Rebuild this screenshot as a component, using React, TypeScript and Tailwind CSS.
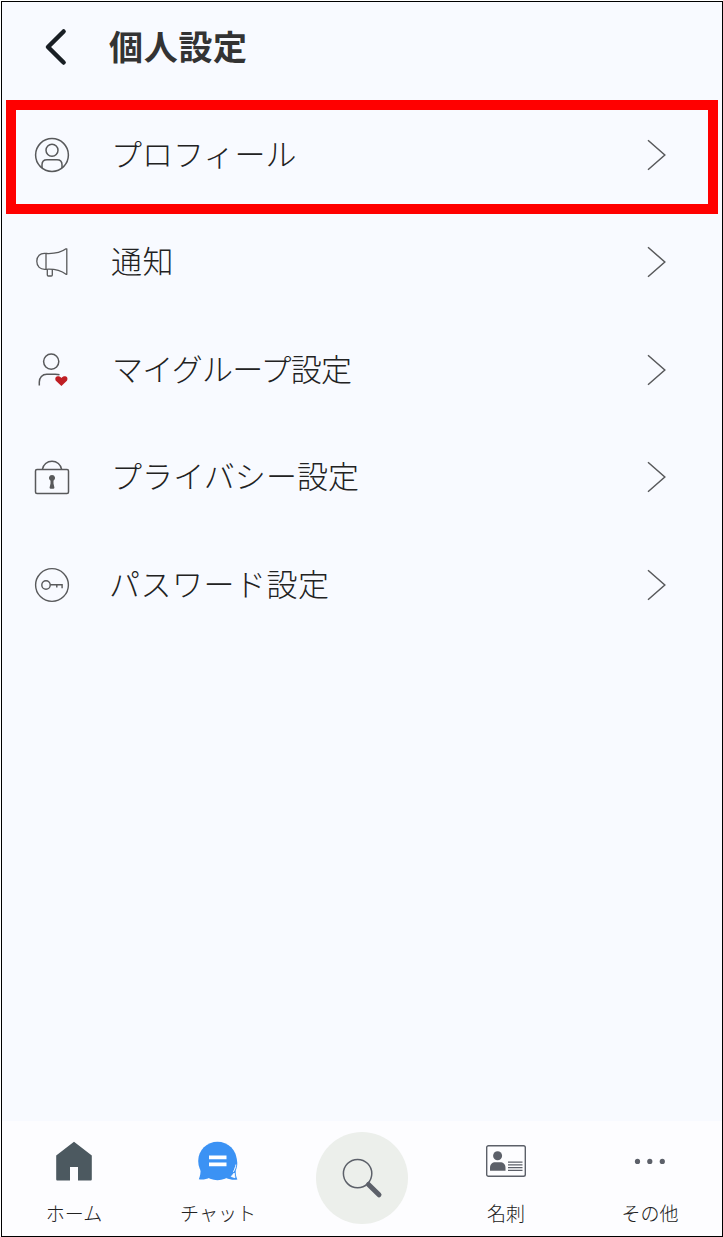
import type { ReactNode } from "react";

const stroke = "#58595b";

function ProfileIcon() {
  return (
    <svg width="36" height="36" viewBox="0 0 36 36" fill="none" stroke={stroke} strokeWidth="1.5">
      <circle cx="18" cy="18" r="16.4" />
      <circle cx="18" cy="13.2" r="6" />
      <path d="M8 31v-3.200c0-3.200 1.800-5 5-5h10c3.200 0 5 1.800 5 5V31" />
    </svg>
  );
}

function MegaphoneIcon() {
  return (
    <svg width="36" height="36" viewBox="0 0 36 36" fill="none" stroke={stroke} strokeWidth="1.3" strokeLinejoin="round">
      <path d="M12 9.500C6 8.700 2.800 12.300 2.800 17.300s3.200 8.600 9.200 8z" />
      <path d="M12 9.500c8.500.4 15.500-1.300 20-4.700h.8v25.500h-.8c-4.500-3.400-11.500-5.500-20-5" />
      <path d="M13.300 25.300v5.600c0 .7.4 1.100 1.100 1.100h2.800c.7 0 1.100-.4 1.100-1.100v-5.600" />
    </svg>
  );
}

function GroupIcon() {
  return (
    <svg width="36" height="36" viewBox="0 0 36 36" fill="none" stroke={stroke} strokeWidth="1.5">
      <circle cx="17.200" cy="9.600" r="7.600" />
      <path d="M5.300 33.500V30c0-4.500 3-7.800 7.500-7.800h8.500c1.500 0 3 .1 4.200.5" />
      <path
        d="M27.400 33.900l-5-4.600c-1.700-1.600-1.400-4.800 1.100-5.100 1.500-.2 3 .5 3.900 1.700.9-1.200 2.400-1.900 3.900-1.700 2.500.3 2.800 3.500 1.100 5.100z"
        fill="#bf1e24"
        stroke="none"
      />
    </svg>
  );
}

function LockIcon() {
  return (
    <svg width="36" height="36" viewBox="0 0 36 36" fill="none" stroke={stroke} strokeWidth="1.500">
      <rect x="1.500" y="10.500" width="33" height="24" rx="1.500" />
      <path d="M8.400 10.300a9.700 9.500 0 0 1 19.200 0" />
      <path d="M18 16a3.100 3.100 0 0 0-1.500 5.800v2.600l-.9 4.200c-.1.600.3 1.100.9 1.100h3c.6 0 1-.5.900-1.100l-.9-4.200v-2.600A3.100 3.100 0 0 0 18 16z" fill={stroke} stroke="none" />
    </svg>
  );
}

function KeyIcon() {
  return (
    <svg width="36" height="36" viewBox="0 0 36 36" fill="none" stroke={stroke} strokeWidth="1.400">
      <circle cx="18" cy="18" r="16.400" />
      <circle cx="12" cy="18" r="4.200" />
      <path d="M16.200 17.700h11.900v3.500M22.800 17.700v2.800" />
    </svg>
  );
}

const settings = [
  { label: "プロフィール", icon: <ProfileIcon />, text: "ml-[41px] tracking-[0px]" },
  { label: "通知", icon: <MegaphoneIcon />, text: "ml-[41px] tracking-[0.6px]" },
  { label: "マイグループ設定", icon: <GroupIcon />, text: "ml-[42px] tracking-[-0.8px]" },
  { label: "プライバシー設定", icon: <LockIcon />, text: "ml-[41px] tracking-[0.1px]" },
  { label: "パスワード設定", icon: <KeyIcon />, text: "ml-[39px] tracking-[0.5px]" },
];

function SettingRow({ label, icon, text }: { label: string; icon: ReactNode; text: string }) {
  return (
    <button className="flex h-[107.5px] w-full items-center pl-8 pr-[54px] text-left">
      <span className="w-9 shrink-0">{icon}</span>
      <span className={`flex-1 pb-[5px] text-[31px] leading-none font-light ${text}`}>{label}</span>
      <svg width="22" height="34" viewBox="0 0 22 34" fill="none" stroke={stroke} strokeWidth="1.500">
        <path d="M2 2.200 18.800 17 2 31.800" />
      </svg>
    </button>
  );
}

function TabItem({ label, children }: { label: string; children: ReactNode }) {
  return (
    <button className="flex flex-col items-center pt-5">
      <span className="flex h-10 items-center">{children}</span>
      <span className="mt-[22px] text-[19px] leading-5 font-light whitespace-nowrap">{label}</span>
    </button>
  );
}

function TabBar() {
  return (
    <nav className="grid h-[115px] shrink-0 grid-cols-5 bg-[#fdfdff]">
      <TabItem label="ホーム">
        <svg width="40" height="40" viewBox="0 0 40 40">
          <path d="M20 .800 37.800 14.500v23.700c0 .8-.5 1.300-1.300 1.300H24V26h-8v13.500H3.500c-.8 0-1.300-.5-1.300-1.300V14.500z" fill="#4c5960" />
        </svg>
      </TabItem>
      <TabItem label="チャット">
        <svg width="40" height="40" viewBox="0 0 40 40">
          <circle cx="19.500" cy="20" r="19.300" fill="#3b92f4" />
          <path d="M2.500 28c.3 3.500-.3 7-1.700 10.300 3.800.6 7.800 0 11-1.800zM36.500 14c3.500 5 3.500 10 1.300 15.500-.3 3.200.2 6.200 1.600 9-4 .5-8 0-11.400-1.600z" fill="#3b92f4" />
          <path d="M37.900 23.500c-.3 3-1.200 5.400-2.700 7.600M36.200 32l.8 4.700-3.800-1.200z" stroke="#fdfdff" strokeWidth=".8" fill="#fdfdff" />
          <path d="M11 14.500h17.500v3.700H11zM11 21.500h17.500v3.700H11z" fill="#fff" />
        </svg>
      </TabItem>
      <button className="mt-[11px] flex size-[92px] items-center justify-center justify-self-center rounded-full bg-[#ecefeb]">
        <svg width="42" height="42" viewBox="0 0 42 42" fill="none" stroke="#5c6069">
          <circle cx="16.600" cy="16.600" r="14.200" strokeWidth="1.500" />
          <path d="m27.500 27.500 10.500 10.300" strokeWidth="5" strokeLinecap="round" />
        </svg>
      </button>
      <TabItem label="名刺">
        <svg width="40" height="32" viewBox="0 0 40 32" fill="#5c6069">
          <rect x=".7" y=".7" width="38.600" height="30.600" rx="1.800" fill="none" stroke="#5c6069" strokeWidth="1.400" />
          <circle cx="11.600" cy="10.700" r="4.500" />
          <path d="M4 25.800v-3c0-3.500 2.200-5.500 5.500-5.500h4.500c3.300 0 5.500 2 5.500 5.500v3z" />
          <path d="M22 17.200h14.500M22 19.900h14.500M22 22.600h14.500M22 25.300h14.500" stroke="#5c6069" strokeWidth="1.200" />
        </svg>
      </TabItem>
      <TabItem label="その他">
        <svg width="32" height="6" viewBox="0 0 32 6" fill="#5c6069">
          <circle cx="3.500" cy="3.400" r="2.600" />
          <circle cx="15.800" cy="3.400" r="2.600" />
          <circle cx="28.300" cy="3.400" r="2.600" />
        </svg>
      </TabItem>
    </nav>
  );
}

export default function App() {
  return (
    <div className="h-[1237px] w-[723px] bg-white pt-px pl-px font-['Noto_Sans_CJK_JP',sans-serif] text-[#222]">
      <div className="relative flex h-[1236px] w-[722px] flex-col border border-black bg-[#f8faff]">
        <header className="flex h-[99px] shrink-0 items-start pt-[26px] pl-[42px]">
          <svg width="24" height="38" viewBox="0 0 24 38" fill="none" stroke="#191f24" strokeWidth="4.500" strokeLinecap="round" strokeLinejoin="round">
            <path d="M19.600 3.500 4 19 19.600 34.500" />
          </svg>
          <h1 className="ml-[41px] text-[34px] leading-[36px] font-bold tracking-[0.7px] text-[#333]">個人設定</h1>
        </header>
        <main className="flex-1">
          {settings.map((item) => (
            <SettingRow key={item.label} {...item} />
          ))}
        </main>
        <TabBar />
        {/* highlight around the profile row */}
        <div className="pointer-events-none absolute top-[98px] left-1 h-[114px] w-[712px] border-[10px] border-[#ff0000]" />
      </div>
    </div>
  );
}
